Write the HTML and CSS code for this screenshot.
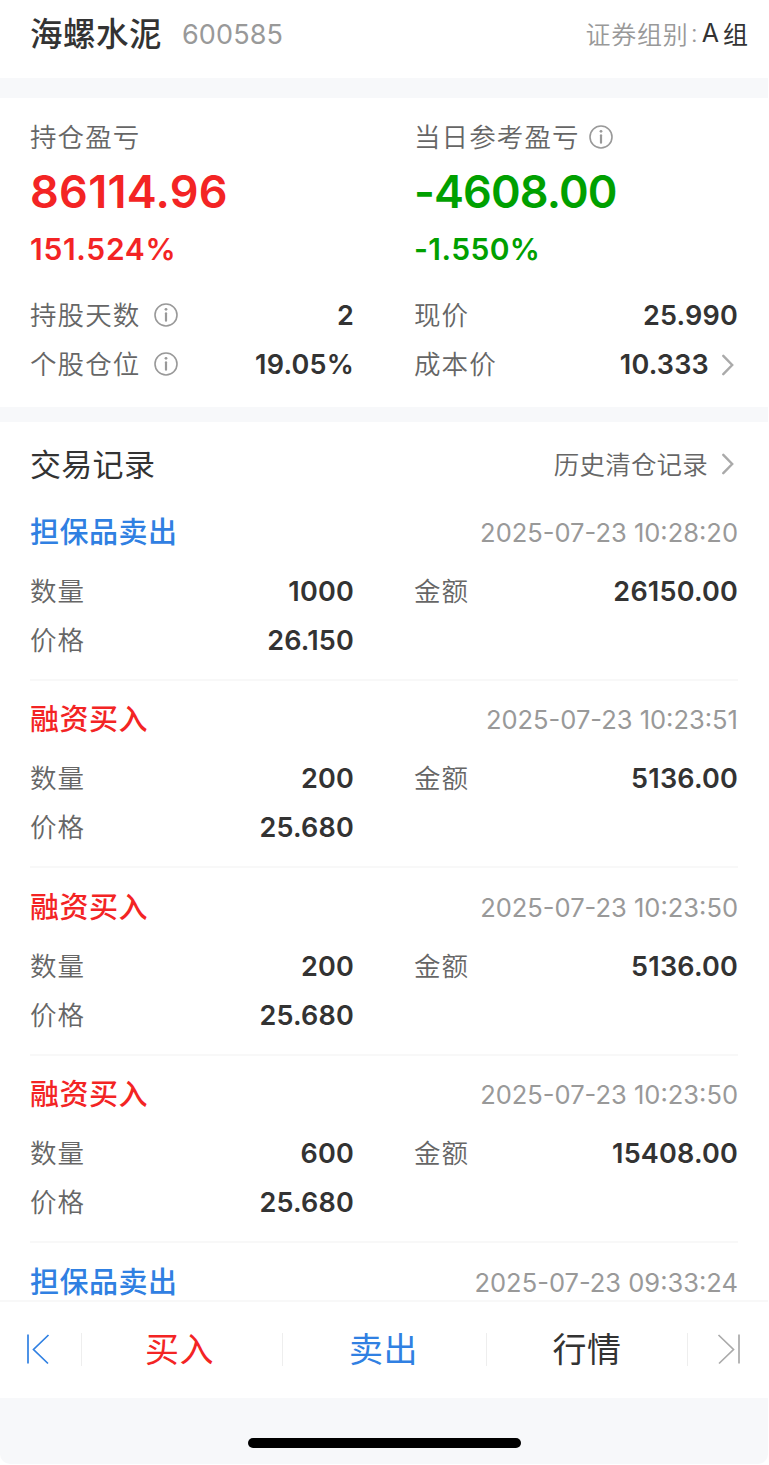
FILE: index.html
```
<!DOCTYPE html>
<html lang="zh-CN">

<head>
  <meta charset="UTF-8" />
  <meta name="viewport" content="width=device-width, initial-scale=1.0" />
  <title>海螺水泥 600585</title>
  <link rel="stylesheet" href="styles.css">
</head>

<body>
  <svg class="sprite">
    <symbol id="icon-info" viewBox="0 0 24 24">
      <circle cx="12" cy="12" r="11" fill="none" stroke="currentColor" stroke-width="1.6" />
      <circle cx="12" cy="6.3" r="1.4" fill="currentColor" />
      <path d="M12 10.3v7.4" fill="none" stroke="currentColor" stroke-width="2.2" stroke-linecap="round" />
    </symbol>
    <symbol id="icon-arrow" viewBox="0 0 12 22">
      <path d="M1.3 1.8L10.2 11L1.3 20.2" fill="none" stroke="currentColor" stroke-width="2.4" stroke-linecap="round" />
    </symbol>
  </svg>

  <div class="page">
    <header class="header">
      <h1 class="stock-name">海螺水泥</h1>
      <span class="stock-code">600585</span>
      <div class="group"><span class="group-label">证券组别</span><span class="colon">:</span><span class="group-letter">A</span><span class="group-value">组</span></div>
    </header>

    <section class="summary">
      <div class="profit up">
        <div class="label">持仓盈亏</div>
        <div class="profit-value">86114.96</div>
        <div class="profit-rate">151.524%</div>
      </div>
      <div class="profit down">
        <div class="label">当日参考盈亏<svg class="info near"><use href="#icon-info" /></svg></div>
        <div class="profit-value">-4608.00</div>
        <div class="profit-rate">-1.550%</div>
      </div>
      <div class="row"><span class="label">持股天数<svg class="info"><use href="#icon-info" /></svg></span><span class="value">2</span></div>
      <div class="row"><span class="label">现价</span><span class="value">25.990</span></div>
      <div class="row"><span class="label">个股仓位<svg class="info"><use href="#icon-info" /></svg></span><span class="value">19.05%</span></div>
      <div class="row"><span class="label">成本价</span><span class="value">10.333<svg class="arrow"><use href="#icon-arrow" /></svg></span></div>
    </section>

    <section class="records">
      <div class="records-head">
        <h2 class="records-title">交易记录</h2>
        <a class="history"><span class="history-text">历史清仓记录</span><svg class="arrow"><use href="#icon-arrow" /></svg></a>
      </div>

      <div class="record">
        <div class="record-head"><span class="type sell">担保品卖出</span><span class="time">2025-07-23 10:28:20</span></div>
        <div class="record-body">
          <div class="row"><span class="label">数量</span><span class="value">1000</span></div>
          <div class="row"><span class="label">金额</span><span class="value">26150.00</span></div>
          <div class="row"><span class="label">价格</span><span class="value">26.150</span></div>
        </div>
      </div>

      <div class="record">
        <div class="record-head"><span class="type buy">融资买入</span><span class="time">2025-07-23 10:23:51</span></div>
        <div class="record-body">
          <div class="row"><span class="label">数量</span><span class="value">200</span></div>
          <div class="row"><span class="label">金额</span><span class="value">5136.00</span></div>
          <div class="row"><span class="label">价格</span><span class="value">25.680</span></div>
        </div>
      </div>

      <div class="record">
        <div class="record-head"><span class="type buy">融资买入</span><span class="time">2025-07-23 10:23:50</span></div>
        <div class="record-body">
          <div class="row"><span class="label">数量</span><span class="value">200</span></div>
          <div class="row"><span class="label">金额</span><span class="value">5136.00</span></div>
          <div class="row"><span class="label">价格</span><span class="value">25.680</span></div>
        </div>
      </div>

      <div class="record">
        <div class="record-head"><span class="type buy">融资买入</span><span class="time">2025-07-23 10:23:50</span></div>
        <div class="record-body">
          <div class="row"><span class="label">数量</span><span class="value">600</span></div>
          <div class="row"><span class="label">金额</span><span class="value">15408.00</span></div>
          <div class="row"><span class="label">价格</span><span class="value">25.680</span></div>
        </div>
      </div>

      <div class="record">
        <div class="record-head"><span class="type sell">担保品卖出</span><span class="time">2025-07-23 09:33:24</span></div>
      </div>
    </section>

    <nav class="toolbar">
      <a class="step first"><svg viewBox="0 0 24 32"><path d="M2 1.5V30.5M22.5 2L7.5 16.5L22 30.5" /></svg></a>
      <a class="tab tab-buy buy">买入</a>
      <a class="tab tab-sell sell">卖出</a>
      <a class="tab">行情</a>
      <a class="step last"><svg viewBox="0 0 24 32"><path d="M22 1.5V30.5M1.5 2L16.5 16.5L2 30.5" /></svg></a>
    </nav>

    <div class="home-area">
      <div class="home-bar"></div>
    </div>
  </div>
</body>

</html>
```
FILE: styles.css
```
* {
  box-sizing: border-box;
}

body {
  margin: 0;
  background: #fff;
  color: #333;
  font-family: Inter, "Noto Sans CJK SC", sans-serif;
}

h1,
h2 {
  margin: 0;
}

.sprite {
  display: none;
}

.page {
  display: flex;
  flex-direction: column;
  width: 768px;
  height: 1464px;
  overflow: hidden;
}

.header {
  display: flex;
  align-items: center;
  height: 78px;
  padding: 0 20px 10px 30px;
}

.stock-name {
  padding-top: 2px;
  font-size: 32.5px;
  font-weight: 500;
  letter-spacing: 0.5px;
  line-height: 48px;
}

.stock-code {
  margin-left: 20px;
  color: #999;
  font-size: 27px;
  font-weight: 400;
  letter-spacing: 0.1px;
}

.group {
  display: flex;
  align-items: center;
  margin-left: auto;
  padding-bottom: 2px;
  font-size: 25px;
}

.group-label,
.colon {
  color: #999;
  font-weight: 350;
}

.group-label {
  letter-spacing: 0.8px;
}

.colon {
  margin: 0 4px 0 2px;
}

.group-letter {
  margin-right: 4px;
}

.summary {
  display: grid;
  grid-template-columns: 324px 324px;
  grid-template-rows: 173px 49px 49px;
  column-gap: 60px;
  height: 344px;
  padding: 20px 30px 14px;
  border-top: 20px solid #f7f8fa;
  border-bottom: 15px solid #f7f8fa;
}

.label {
  display: flex;
  align-items: center;
  color: #666;
  font-size: 26.5px;
  font-weight: 350;
  letter-spacing: 1.1px;
  line-height: 39px;
}

.info {
  width: 24px;
  height: 24px;
  margin-left: 14px;
  margin-bottom: 1px;
  color: #999;
}

.info.near {
  margin-left: 9px;
}

.profit-value {
  margin-top: 5px;
  font-size: 45px;
  font-weight: 600;
  line-height: 60px;
}

.profit-rate {
  margin-top: 7px;
  font-size: 30px;
  font-weight: 600;
  line-height: 40px;
}

.up .profit-value {
  letter-spacing: 0.3px;
}

.down .profit-value {
  letter-spacing: -0.9px;
}

.up .profit-rate {
  letter-spacing: 0.7px;
}

.down .profit-rate {
  letter-spacing: 0.4px;
}

.up,
.buy {
  color: #f32424;
}

.down {
  color: #00a000;
}

.sell {
  color: #3080e2;
}

.row {
  display: flex;
  align-items: center;
  justify-content: space-between;
  height: 49px;
}

.value {
  display: flex;
  align-items: center;
  font-size: 27px;
  font-weight: 600;
  letter-spacing: 0.2px;
}

.arrow {
  width: 12px;
  height: 22px;
  margin: 0 4px 0 13px;
  color: #aaa;
}

.records {
  height: 878px;
  padding: 0 30px;
  overflow: hidden;
}

.records-head {
  display: flex;
  align-items: center;
  justify-content: space-between;
  height: 71px;
  padding-top: 13px;
}

.records-title {
  padding-bottom: 4px;
  font-size: 31px;
  font-weight: 400;
  letter-spacing: 0.3px;
}

.history {
  display: flex;
  align-items: center;
  color: #666;
  font-size: 25.5px;
  font-weight: 350;
}

.history-text {
  margin-right: 1px;
  padding-bottom: 4px;
  letter-spacing: 0.2px;
}

.record {
  height: 187.5px;
  padding-top: 14.5px;
  border-bottom: 2px solid #f8f8f8;
}

.record-head {
  display: flex;
  align-items: center;
  justify-content: space-between;
  height: 49px;
}

.type {
  padding-top: 1px;
  font-size: 29px;
  font-weight: 500;
  letter-spacing: 0.5px;
  line-height: 32px;
}

.time {
  color: #999;
  font-size: 25.5px;
  font-weight: 400;
}

.record-body {
  display: grid;
  grid-template-columns: 324px 324px;
  column-gap: 60px;
  padding-top: 10px;
}

.toolbar {
  display: flex;
  align-items: center;
  height: 98px;
  padding-bottom: 2px;
  border-top: 2px solid #f8f8f8;
}

.tab,
.step {
  display: flex;
  align-items: center;
  height: 33px;
}

.tab {
  justify-content: center;
  width: 201px;
  padding-bottom: 4px;
  border-right: 1px solid #eee;
  font-size: 34px;
  letter-spacing: 0.6px;
}

.tab-buy {
  padding-right: 5px;
}

.tab-sell {
  width: 204px;
  padding-right: 2px;
}

.step {
  width: 82px;
}

.step svg {
  width: 24px;
  height: 32px;
  fill: none;
  stroke: currentColor;
  stroke-width: 1.7;
}

.first {
  padding-left: 26px;
  border-right: 1px solid #eee;
  color: #3080e2;
}

.last {
  width: 80px;
  padding-left: 29px;
  color: #aaa;
}

.home-area {
  display: flex;
  justify-content: center;
  height: 66px;
  padding-top: 40px;
  border-radius: 0 0 10px 10px;
  background: #f7f8fa;
}

.home-bar {
  width: 273px;
  height: 10px;
  border-radius: 5px;
  background: #000;
}
```
